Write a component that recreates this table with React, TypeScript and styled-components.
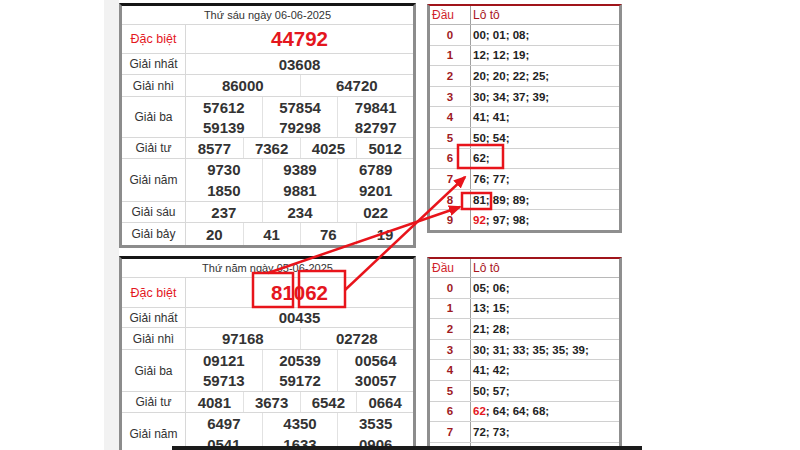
import React from 'react';
import styled, { createGlobalStyle } from 'styled-components';

const Global = createGlobalStyle`
  html, body { margin: 0; padding: 0; background: #fff; }
  body { font-family: "Liberation Sans", Arial, sans-serif; }
`;

const Page = styled.div`
  position: relative;
  width: 800px;
  height: 450px;
  overflow: hidden;
  background: #fff;
  display: flex;
  align-items: stretch;
`;

const SideStrip = styled.div`
  flex: none;
  width: 15px;
  margin-left: 104px;
  background: #f2f2f2;
`;

const Content = styled.div`
  display: flex;
  flex-direction: column;
  gap: 8px;
  padding-top: 3px;
`;

const Pair = styled.div`
  display: flex;
  align-items: flex-start;
  gap: 11px;
`;

/* ---------- result table ---------- */
const ResultTable = styled.div`
  width: 297px;
  box-sizing: border-box;
  border: 3px solid #8c8c8c;
  border-top: 3px solid #151515;
  background: #fff;
`;

const TitleRow = styled.div`
  height: 18px;
  line-height: 19px;
  text-align: center;
  font-size: 11px;
  color: #333;
  border-bottom: 1px solid #d8d8d8;
`;

const PrizeRow = styled.div`
  display: grid;
  grid-template-columns: 64px 1fr;
  border-bottom: 1px solid #d8d8d8;
  &:last-child { border-bottom: none; }
`;

const PrizeLabel = styled.div<{ $special?: boolean }>`
  display: flex;
  align-items: center;
  justify-content: center;
  font-size: ${p => (p.$special ? '12.5px' : '12px')};
  color: ${p => (p.$special ? '#e4161e' : '#333')};
  border-right: 1px solid #d8d8d8;
`;

const PrizeValues = styled.div<{ $cols: number }>`
  display: grid;
  grid-template-columns: repeat(${p => p.$cols}, 1fr);
`;

const PrizeNum = styled.div<{ $h: number; $big?: boolean; $first?: boolean }>`
  height: ${p => p.$h}px;
  display: flex;
  align-items: center;
  justify-content: center;
  font-weight: bold;
  font-size: ${p => (p.$big ? '20.5px' : '15px')};
  color: ${p => (p.$big ? '#e4161e' : '#333')};
  border-left: ${p => (p.$first ? 'none' : '1px solid #e2e2e2')};
`;

/* ---------- loto table ---------- */
const LotoTable = styled.div`
  width: 195px;
  box-sizing: border-box;
  margin-top: 1px;
  border: 3px solid #8f8f8f;
  border-top: 2px solid #a0141a;
  background: #fff;
`;

const LotoHead = styled.div`
  display: grid;
  grid-template-columns: 41px 1fr;
  height: 18px;
  border-bottom: 1px solid #b8b8b8;
  font-size: 12px;
`;

const HeadCell = styled.div<{ $first?: boolean }>`
  display: flex;
  align-items: center;
  padding-left: 2px;
  color: ${p => (p.$first ? '#d0242b' : '#a8151c')};
  border-right: ${p => (p.$first ? '1px solid #a0a0a0' : 'none')};
`;

const LotoRow = styled.div`
  display: grid;
  grid-template-columns: 41px 1fr;
  height: 19.6px;
  border-bottom: 1px solid #d0d0d0;
  &:last-child { border-bottom: none; }
`;

const HeadDigit = styled.div`
  display: flex;
  align-items: center;
  justify-content: center;
  font-size: 11.5px;
  font-weight: bold;
  color: #9e1a1f;
  border-right: 1px solid #a0a0a0;
`;

const LotoNums = styled.div`
  display: flex;
  align-items: center;
  padding-left: 2px;
  font-size: 11.5px;
  font-weight: bold;
  color: #222;
  white-space: pre;
`;

const Hot = styled.span`
  color: #e4161e;
`;

/* ---------- overlay ---------- */
const Overlay = styled.svg`
  position: absolute;
  left: 0;
  top: 0;
  pointer-events: none;
`;

const BottomBar = styled.div`
  position: absolute;
  left: 172px;
  top: 446px;
  width: 470px;
  height: 4px;
  background: #1b1b1b;
`;

type Prize = { label: string; cols: number; h: number; nums: string[]; special?: boolean };

type Day = {
  title: string;
  prizes: Prize[];
  loto: { head: string; nums: string[]; hot?: string }[];
};

const days: Day[] = [
  {
    title: 'Thứ sáu ngày 06-06-2025',
    prizes: [
      { label: 'Đặc biệt', cols: 1, h: 28, nums: ['44792'], special: true },
      { label: 'Giải nhất', cols: 1, h: 20, nums: ['03608'] },
      { label: 'Giải nhì', cols: 2, h: 21, nums: ['86000', '64720'] },
      { label: 'Giải ba', cols: 3, h: 20, nums: ['57612', '57854', '79841', '59139', '79298', '82797'] },
      { label: 'Giải tư', cols: 4, h: 20, nums: ['8577', '7362', '4025', '5012'] },
      { label: 'Giải năm', cols: 3, h: 21, nums: ['9730', '9389', '6789', '1850', '9881', '9201'] },
      { label: 'Giải sáu', cols: 3, h: 20, nums: ['237', '234', '022'] },
      { label: 'Giải bảy', cols: 4, h: 22, nums: ['20', '41', '76', '19'] },
    ],
    loto: [
      { head: '0', nums: ['00', '01', '08'] },
      { head: '1', nums: ['12', '12', '19'] },
      { head: '2', nums: ['20', '20', '22', '25'] },
      { head: '3', nums: ['30', '34', '37', '39'] },
      { head: '4', nums: ['41', '41'] },
      { head: '5', nums: ['50', '54'] },
      { head: '6', nums: ['62'] },
      { head: '7', nums: ['76', '77'] },
      { head: '8', nums: ['81', '89', '89'] },
      { head: '9', nums: ['92', '97', '98'], hot: '92' },
    ],
  },
  {
    title: 'Thứ năm ngày 05-06-2025',
    prizes: [
      { label: 'Đặc biệt', cols: 1, h: 29, nums: ['81062'], special: true },
      { label: 'Giải nhất', cols: 1, h: 19, nums: ['00435'] },
      { label: 'Giải nhì', cols: 2, h: 21, nums: ['97168', '02728'] },
      { label: 'Giải ba', cols: 3, h: 20.5, nums: ['09121', '20539', '00564', '59713', '59172', '30057'] },
      { label: 'Giải tư', cols: 4, h: 20, nums: ['4081', '3673', '6542', '0664'] },
      { label: 'Giải năm', cols: 3, h: 21, nums: ['6497', '4350', '3535', '0541', '1633', '0906'] },
      { label: 'Giải sáu', cols: 3, h: 20, nums: ['430', '231', '215'] },
      { label: 'Giải bảy', cols: 4, h: 22, nums: ['05', '86', '99', '30'] },
    ],
    loto: [
      { head: '0', nums: ['05', '06'] },
      { head: '1', nums: ['13', '15'] },
      { head: '2', nums: ['21', '28'] },
      { head: '3', nums: ['30', '31', '33', '35', '35', '39'] },
      { head: '4', nums: ['41', '42'] },
      { head: '5', nums: ['50', '57'] },
      { head: '6', nums: ['62', '64', '64', '68'], hot: '62' },
      { head: '7', nums: ['72', '73'] },
      { head: '8', nums: ['81', '86'] },
      { head: '9', nums: ['97', '99'] },
    ],
  },
];

function Result({ day }: { day: Day }) {
  return (
    <ResultTable>
      <TitleRow>{day.title}</TitleRow>
      {day.prizes.map(p => (
        <PrizeRow key={p.label}>
          <PrizeLabel $special={p.special}>{p.label}</PrizeLabel>
          <PrizeValues $cols={p.cols}>
            {p.nums.map((n, i) => (
              <PrizeNum key={i} $h={p.h} $big={p.special} $first={i % p.cols === 0}>
                {n}
              </PrizeNum>
            ))}
          </PrizeValues>
        </PrizeRow>
      ))}
    </ResultTable>
  );
}

function Loto({ day }: { day: Day }) {
  return (
    <LotoTable>
      <LotoHead>
        <HeadCell $first>Đầu</HeadCell>
        <HeadCell>Lô tô</HeadCell>
      </LotoHead>
      {day.loto.map(r => (
        <LotoRow key={r.head}>
          <HeadDigit>{r.head}</HeadDigit>
          <LotoNums>
            {r.nums.map((n, i) => (
              <React.Fragment key={i}>
                {n === r.hot && i === 0 ? <Hot>{n}</Hot> : n}
                {i < r.nums.length - 1 ? '; ' : ';'}
              </React.Fragment>
            ))}
          </LotoNums>
        </LotoRow>
      ))}
    </LotoTable>
  );
}

const RED = '#e8141b';

export default function App() {
  return (
    <>
      <Global />
      <Page>
        <SideStrip />
        <Content>
          {days.map(d => (
            <Pair key={d.title}>
              <Result day={d} />
              <Loto day={d} />
            </Pair>
          ))}
        </Content>
        <Overlay width={800} height={450} viewBox="0 0 800 450">
          <defs>
            <marker id="ah" markerUnits="userSpaceOnUse" markerWidth="13" markerHeight="11" refX="11" refY="5.5" orient="auto">
              <path d="M0,0 L13,5.5 L0,11 z" fill={RED} />
            </marker>
          </defs>
          <g fill="none" stroke={RED} strokeWidth={2.5}>
            <rect x={253} y={273} width={40} height={34} />
            <rect x={299} y={271} width={46} height={36} />
            <rect x={458} y={145} width={45} height={23} />
            <rect x={462} y={193} width={29} height={16} />
            <line x1={268} y1={273} x2={460} y2={207} markerEnd="url(#ah)" />
            <line x1={345} y1={290} x2={465} y2={177} markerEnd="url(#ah)" />
          </g>
        </Overlay>
        <BottomBar />
      </Page>
    </>
  );
}
